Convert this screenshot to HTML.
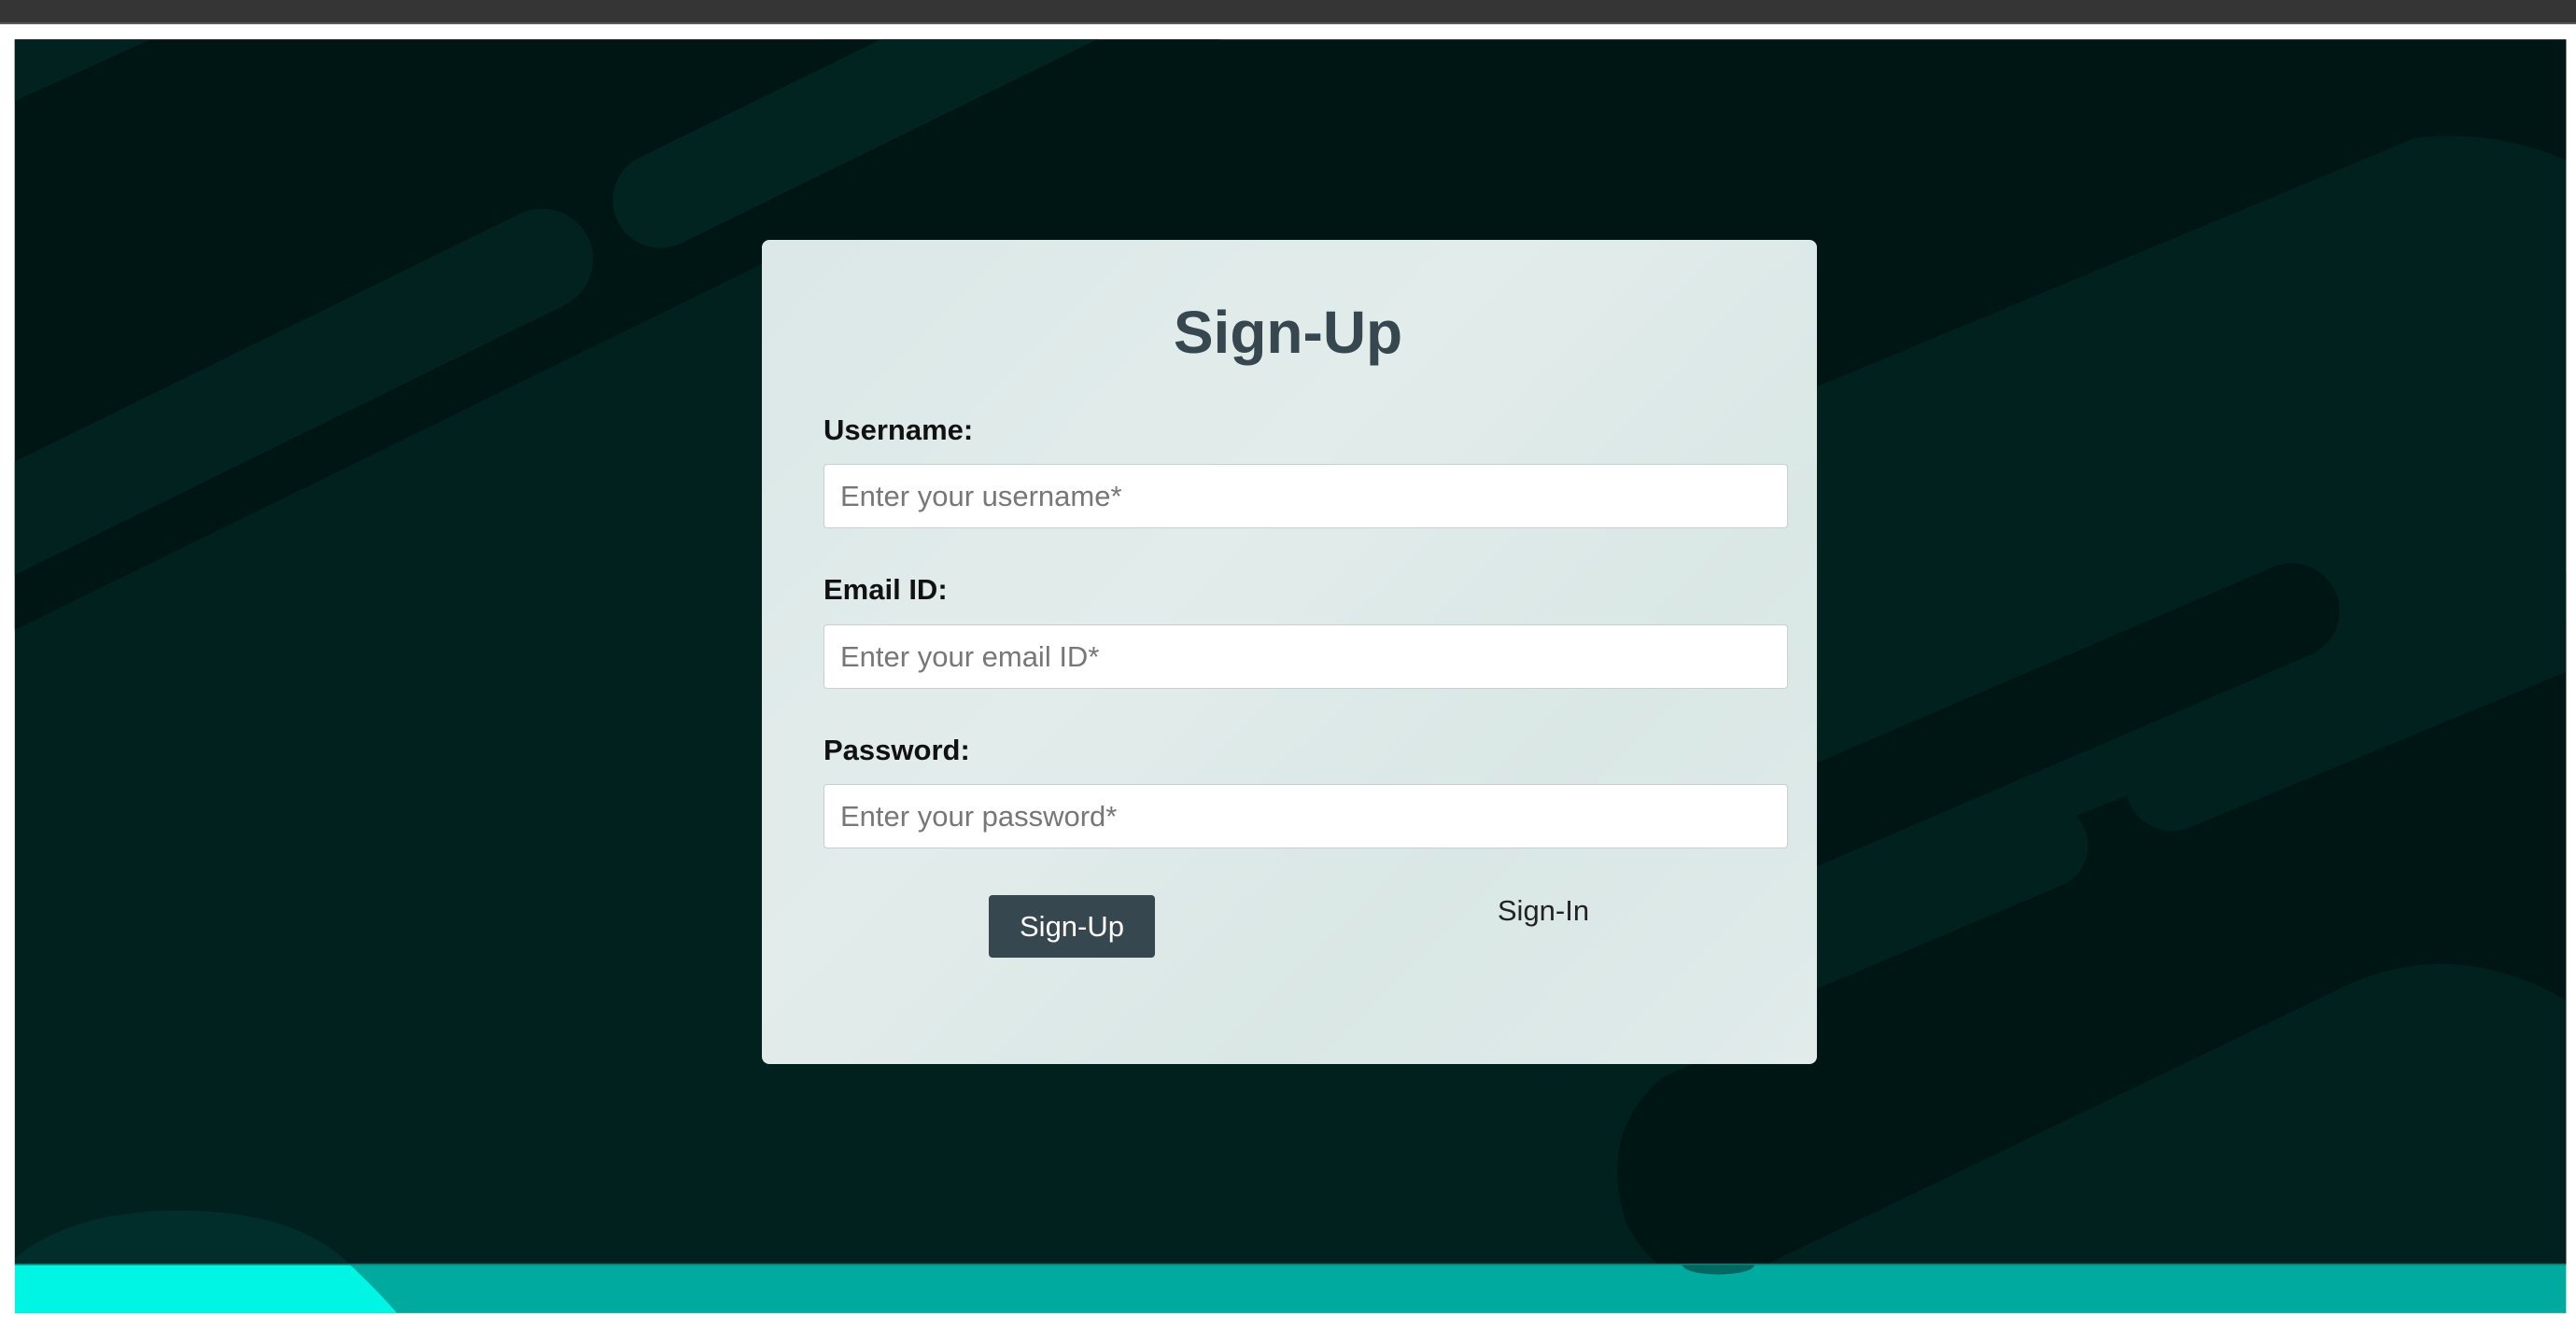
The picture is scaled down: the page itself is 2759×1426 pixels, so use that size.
<!DOCTYPE html>
<html><head><meta charset="utf-8">
<style>
html,body{margin:0;padding:0;width:2759px;height:1426px;overflow:hidden;background:#fff;font-family:"Liberation Sans",Arial,sans-serif;}
.topbar{position:absolute;left:0;top:0;width:2759px;height:24px;background:#353535;border-bottom:2px solid #5a5a5a;}
svg.bg{position:absolute;left:0;top:0;}
.card{position:absolute;left:816px;top:257px;width:1130px;height:883px;border-radius:8px;background:linear-gradient(135deg,#dbe8e7 0%,#e2eceb 40%,#d9e7e5 70%,#e0ebea 100%);}
h1{position:absolute;left:0;width:100%;top:318px;margin:0;text-align:center;font-size:64px;font-weight:bold;color:#37474f;line-height:76px;}
.lbl{position:absolute;left:882px;font-size:31px;font-weight:bold;color:#111;line-height:36px;}
.inp{position:absolute;left:882px;width:1033px;height:69px;background:#fff;border:1px solid #c9cfcf;border-radius:4px;box-sizing:border-box;font-size:31px;color:#777;line-height:67px;padding-left:17px;}
.btn{position:absolute;left:1059px;top:959px;width:178px;height:67px;background:#37474f;border-radius:4px;color:#fff;font-size:31px;line-height:67px;text-align:center;}
.signin{position:absolute;left:1553px;width:200px;text-align:center;top:958px;font-size:31px;color:#222;line-height:36px;}
</style></head><body>
<div class="topbar"></div>
<svg class="bg" width="2759" height="1426" viewBox="0 0 1568 810.4" preserveAspectRatio="none">
<defs><clipPath id="c"><rect x="9" y="24" width="1553" height="746"/></clipPath>
<clipPath id="c2"><rect x="9" y="770" width="1553" height="29.5"/></clipPath></defs>
<g clip-path="url(#c)">
<rect x="0" y="0" width="1568" height="810" fill="#01211f"/>
<path d="M0,0 L792,0 L8,384 L0,388 Z" fill="#001614"/>
<path d="M500,24 L1568,24 L1568,100 Q1520,78 1470,84 L470,500 Z" fill="#001614"/>
<line x1="330" y1="158" x2="-100" y2="369" stroke="#01221f" stroke-width="62" stroke-linecap="round"/>
<line x1="402" y1="122" x2="800" y2="-73" stroke="#012421" stroke-width="58" stroke-linecap="round"/>
<polygon points="8,24 92,24 8,62" fill="#01221f"/>
<line x1="1395" y1="372" x2="980" y2="550" stroke="#001614" stroke-width="58" stroke-linecap="round"/>
<path d="M1106,560 L1568,375 L1568,800 L1106,800 Z" fill="#001614"/>
<line x1="1322" y1="478" x2="1680" y2="330" stroke="#01211f" stroke-width="56" stroke-linecap="round"/>
<line x1="1245" y1="515" x2="950" y2="640" stroke="#01211f" stroke-width="52" stroke-linecap="round"/>
<path d="M1420,604 Q1481,572 1545,600 L1568,612 L1568,800 L1050,800 L1075,770 Z" fill="#01211f"/>
<path d="M1110,612 L1012,656 Q972,690 990,745 Q1010,785 1050,777 L1075,770 L1110,753 Z" fill="#001614"/>
<path d="M9,766 Q45,737 108,737 Q180,737 213,770 L9,770 Z" fill="#012e2b"/>
</g>
<g clip-path="url(#c2)">
<rect x="9" y="770" width="1553" height="30" fill="#00aa9f"/>
<path d="M9,770 L213,770 Q232,788 242,800 L9,800 Z" fill="#00f5e4"/>
<ellipse cx="1046" cy="770" rx="22" ry="6" fill="#006860"/>
</g>
<rect x="9" y="769.3" width="1553" height="1" fill="#0f7c75"/>
</svg>
<div class="card"></div>
<h1>Sign-Up</h1>
<div class="lbl" style="top:443px">Username:</div>
<div class="inp" style="top:497px">Enter your username*</div>
<div class="lbl" style="top:614px">Email ID:</div>
<div class="inp" style="top:669px">Enter your email ID*</div>
<div class="lbl" style="top:786px">Password:</div>
<div class="inp" style="top:840px">Enter your password*</div>
<div class="btn">Sign-Up</div>
<div class="signin">Sign-In</div>
</body></html>
